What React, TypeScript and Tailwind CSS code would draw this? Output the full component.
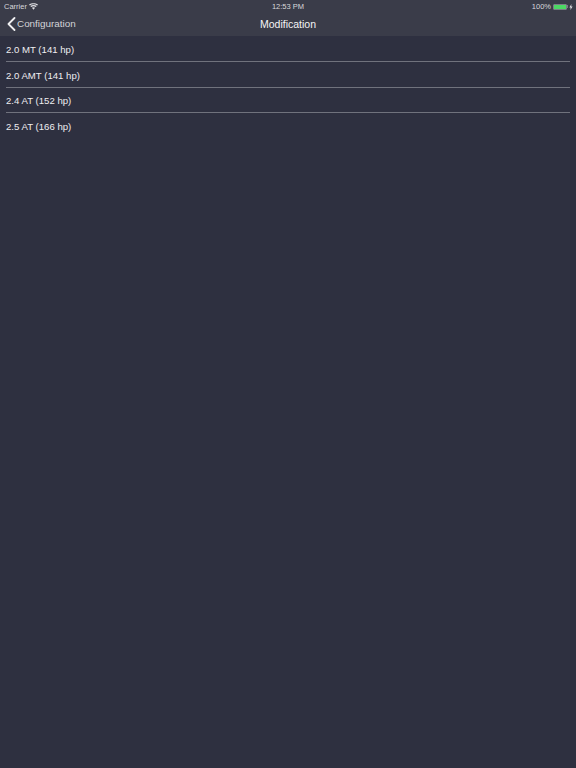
const rows = ["2.0 MT (141 hp)", "2.0 AMT (141 hp)", "2.4 AT (152 hp)", "2.5 AT (166 hp)"];

export default function App() {
  return (
    <div className="w-[576px] h-[768px] bg-[#2e3040] flex flex-col overflow-hidden font-['Liberation_Sans',sans-serif] text-white">
      <header className="h-[36px] shrink-0 bg-[#3a3c49] flex flex-col">
        <div className="h-[12px] pt-[1px] flex items-center justify-between px-[4px] relative text-[7.5px] leading-[11px] text-[#d8d8dc]">
          <div className="flex items-center gap-[2px]">
            <span>Carrier</span>
            <svg width="9" height="7" viewBox="0 0 18 13" fill="#e0e0e4" className="-mt-[1px]">
              <path d="M9 13 L5.8 9.2 C7.6 7.8 10.4 7.8 12.2 9.2Z M4.4 7.6 L2.6 5.5 C6.1 2.6 11.9 2.6 15.4 5.5 L13.6 7.6 C11 5.5 7 5.5 4.4 7.6Z M1.6 4.4 L0 2.6 C5 -0.9 13 -0.9 18 2.6 L16.4 4.4 C12 1.4 6 1.4 1.6 4.4Z" />
            </svg>
          </div>
          <span className="absolute left-0 right-0 text-center">12:53 PM</span>
          <div className="flex items-center gap-[2px] -mr-[1px]">
            <span>100%</span>
            <div className="w-[14px] h-[6px] border border-[#7c7d87] rounded-[1px] flex overflow-hidden">
              <div className="flex-1 bg-[#4cd964]" />
            </div>
            <div className="w-[1px] h-[3px] bg-[#7c7d87] -ml-[2px]" />
            <svg width="4" height="6" viewBox="0 0 4 6" fill="#e0e0e4" className="-ml-[1px]">
              <path d="M2.4 0 L0.4 3.4 H1.7 L1.4 6 L3.6 2.4 H2.2Z" />
            </svg>
          </div>
        </div>
        <div className="h-[24px] relative flex items-center justify-center">
          <div className="absolute left-[7px] top-[5px] flex items-center gap-[1px] text-[#d4d4d8]">
            <svg width="9" height="14" viewBox="0 0 9 14" fill="none" stroke="#f0f0f2" strokeWidth="1.8" strokeLinecap="round" strokeLinejoin="round">
              <path d="M7.5 1 L1.5 7 L7.5 13" />
            </svg>
            <span className="text-[9.9px] leading-[14px]">Configuration</span>
          </div>
          <span className="text-[10.5px] leading-[14px] text-[#f4f4f6]">Modification</span>
        </div>
      </header>
      <ul className="flex flex-col">
        <li className="h-[26px] pt-[3px] mx-[6px] flex items-center border-b border-[#70727d] text-[9.6px] text-[#eeeef0]">{rows[0]}</li>
        <li className="h-[26px] pt-[3px] mx-[6px] flex items-center border-b border-[#70727d] text-[9.6px] text-[#eeeef0]">{rows[1]}</li>
        <li className="h-[25px] pt-[2px] mx-[6px] flex items-center border-b border-[#70727d] text-[9.6px] text-[#eeeef0]">{rows[2]}</li>
        <li className="h-[26px] pt-[2px] mx-[6px] flex items-center text-[9.6px] text-[#eeeef0]">{rows[3]}</li>
      </ul>
    </div>
  );
}
